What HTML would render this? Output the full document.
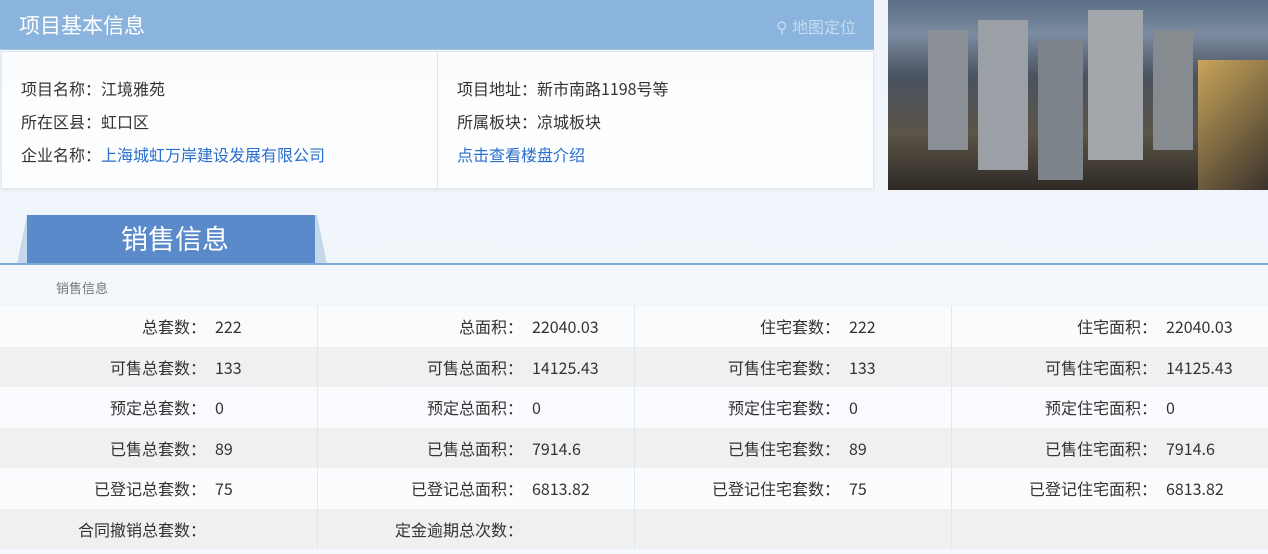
<!DOCTYPE html>
<html><head><meta charset="utf-8"><style>
*{margin:0;padding:0;box-sizing:border-box}
body{width:1268px;height:554px;overflow:hidden;background:linear-gradient(180deg,#eef4fa,#f4f8fc);font-family:"Liberation Sans","Noto Sans CJK SC",sans-serif;position:relative;color:#333}
.hdr{position:absolute;left:0;top:0;width:874px;height:50px;background:#8ab4de;border-bottom:1px solid #a9c8e6}
.hdr .t{position:absolute;left:19px;top:10px;font-size:21px;color:#fff}
.hdr .m{position:absolute;right:18px;top:14px;font-size:16px;color:#c6dbf0}
.info{position:absolute;left:1px;top:51px;width:873px;height:138px;background:rgba(255,255,255,.75);border:1px solid #dfe7f0;box-shadow:0 2px 3px rgba(0,0,0,.05)}
.info .div{position:absolute;left:435px;top:0;bottom:0;width:1px;background:#dde6ef}
.info p{position:absolute;font-size:16px;color:#333;white-space:nowrap;font-family:"Noto Sans CJK SC",sans-serif;line-height:22px}
.info a{color:#2a6ecf;text-decoration:none}
.img{position:absolute;left:888px;top:0;width:380px;height:190px;background:linear-gradient(180deg,#5a6f86 0%,#7b8ba0 18%,#4a5360 40%,#5b5448 70%,#2f2a26 100%);overflow:hidden}
.tab{position:absolute;left:27px;top:215px;width:288px;height:49px;background:#5b8acb;color:#fff;font-size:27px;text-align:center;line-height:50px;padding-left:8px}
.tabs{position:absolute;left:17px;top:215px;width:310px;height:49px;background:#c5d8ea;clip-path:polygon(10px 0,300px 0,310px 49px,0 49px)}
.line{position:absolute;left:0;top:263px;width:1268px;height:2px;background:#7fa9d6}
.sub{position:absolute;left:0;top:265px;width:1268px;height:40px;background:#f3f6fa;font-size:13px;color:#777;padding:13px 0 0 56px}
table{position:absolute;left:0;top:306px;width:1268px;border-collapse:collapse;font-size:16px;font-family:"Noto Sans CJK SC",sans-serif}
td{height:40.5px;border:none;vertical-align:middle;line-height:20px}
tr:nth-child(even){background:#f0f0f0}
tr:nth-child(odd){background:rgba(255,255,255,.55)}
td.l{text-align:right;width:206px;padding-right:0}
td.v{width:111px;padding-left:9px;border-right:1px solid #dce8f3}
td.v:last-child{border-right:none}
</style></head><body>
<div class="hdr"><span class="t">项目基本信息</span><span class="m">⚲ 地图定位</span></div>
<div class="info"><div class="div"></div>
<p style="left:19px;top:25px">项目名称：江境雅苑</p>
<p style="left:19px;top:58px">所在区县：虹口区</p>
<p style="left:19px;top:91px">企业名称：<a>上海城虹万岸建设发展有限公司</a></p>
<p style="left:455px;top:25px">项目地址：新市南路1198号等</p>
<p style="left:455px;top:58px">所属板块：凉城板块</p>
<p style="left:455px;top:91px"><a>点击查看楼盘介绍</a></p>
</div>
<div class="img">
<div style="position:absolute;left:40px;top:30px;width:40px;height:120px;background:#8a8f96"></div>
<div style="position:absolute;left:90px;top:20px;width:50px;height:150px;background:#9aa0a6"></div>
<div style="position:absolute;left:150px;top:40px;width:45px;height:140px;background:#7d838a"></div>
<div style="position:absolute;left:200px;top:10px;width:55px;height:150px;background:#a3a7ab"></div>
<div style="position:absolute;left:265px;top:30px;width:40px;height:120px;background:#868b90"></div>
<div style="position:absolute;left:310px;top:60px;width:70px;height:130px;background:linear-gradient(135deg,#c9a55a,#3a332c)"></div>
</div>
<div class="tabs"></div><div class="tab">销售信息</div>
<div class="line"></div>
<div class="sub">销售信息</div>
<table>
<tr><td class="l">总套数：</td><td class="v">222</td><td class="l">总面积：</td><td class="v">22040.03</td><td class="l">住宅套数：</td><td class="v">222</td><td class="l">住宅面积：</td><td class="v">22040.03</td></tr>
<tr><td class="l">可售总套数：</td><td class="v">133</td><td class="l">可售总面积：</td><td class="v">14125.43</td><td class="l">可售住宅套数：</td><td class="v">133</td><td class="l">可售住宅面积：</td><td class="v">14125.43</td></tr>
<tr><td class="l">预定总套数：</td><td class="v">0</td><td class="l">预定总面积：</td><td class="v">0</td><td class="l">预定住宅套数：</td><td class="v">0</td><td class="l">预定住宅面积：</td><td class="v">0</td></tr>
<tr><td class="l">已售总套数：</td><td class="v">89</td><td class="l">已售总面积：</td><td class="v">7914.6</td><td class="l">已售住宅套数：</td><td class="v">89</td><td class="l">已售住宅面积：</td><td class="v">7914.6</td></tr>
<tr><td class="l">已登记总套数：</td><td class="v">75</td><td class="l">已登记总面积：</td><td class="v">6813.82</td><td class="l">已登记住宅套数：</td><td class="v">75</td><td class="l">已登记住宅面积：</td><td class="v">6813.82</td></tr>
<tr><td class="l">合同撤销总套数：</td><td class="v"></td><td class="l">定金逾期总次数：</td><td class="v"></td><td class="l"></td><td class="v"></td><td class="l"></td><td class="v"></td></tr>
</table>
</body></html>
